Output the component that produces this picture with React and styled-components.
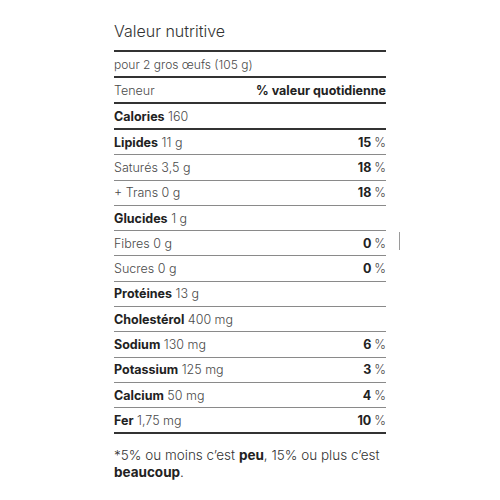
import React from 'react';
import styled, { createGlobalStyle } from 'styled-components';

const GlobalStyle = createGlobalStyle`
  body {
    margin: 0;
    background: #ffffff;
    font-family: Inter, "Liberation Sans", sans-serif;
    color: #333333;
  }
`;

const rows = [
  { name: 'Calories', value: '160', bold: true, thick: true },
  { name: 'Lipides', value: '11 g', pct: '15 %', bold: true },
  { name: 'Saturés 3,5 g', pct: '18 %' },
  { name: '+ Trans 0 g', pct: '18 %' },
  { name: 'Glucides', value: '1 g', bold: true },
  { name: 'Fibres 0 g', pct: '0 %' },
  { name: 'Sucres 0 g', pct: '0 %' },
  { name: 'Protéines', value: '13 g', bold: true },
  { name: 'Cholestérol', value: '400 mg', bold: true },
  { name: 'Sodium', value: '130 mg', pct: '6 %', bold: true },
  { name: 'Potassium', value: '125 mg', pct: '3 %', bold: true },
  { name: 'Calcium', value: '50 mg', pct: '4 %', bold: true },
  { name: 'Fer', value: '1,75 mg', pct: '10 %', bold: true, thick: true },
];

const App = () => {
  return (
    <>
      <GlobalStyle />
      <Label>
        <Title>Valeur nutritive</Title>
        <Row $thick>
          <Light $small>pour 2 gros œufs (105 g)</Light>
        </Row>
        <Row $thick>
          <Light>Teneur</Light>
          <Strong>% valeur quotidienne</Strong>
        </Row>
        {rows.map((r) => (
          <Row key={r.name} $thick={r.thick}>
            <span>
              {r.bold ? <Strong>{r.name}</Strong> : <Light>{r.name}</Light>}
              {r.value && <Light> {r.value}</Light>}
            </span>
            {r.pct && <Strong>{r.pct.replace(' %', '')} <Light>%</Light></Strong>}
          </Row>
        ))}
        <Note>
          *5% ou moins c’est <b>peu</b>, 15% ou plus c’est <b>beaucoup</b>.
        </Note>
        <Tick />
      </Label>
    </>
  );
};

const Label = styled.div`
  position: relative;
  width: 272px;
  margin: 0 auto;
  padding-top: 19px;
`;

const Title = styled.h2`
  margin: 0;
  padding-bottom: 7px;
  font-size: 16px;
  font-weight: 300;
  line-height: 24px;
  color: #333333;
  border-bottom: 2px solid #333333;
`;

const Row = styled.div`
  display: flex;
  align-items: center;
  justify-content: space-between;
  height: ${({ $thick }) => ($thick ? '24px' : '24.3px')};
  font-size: 12.5px;
  border-bottom: ${({ $thick }) => ($thick ? '2px solid #333333' : '1px solid #8a8a8a')};
`;

const Light = styled.span`
  font-weight: 300;
  font-size: ${({ $small }) => ($small ? '12px' : 'inherit')};
  color: #4a4a4a;
`;

const Strong = styled.span`
  font-weight: 700;
  color: #222222;
`;

const Note = styled.p`
  margin: 13px 0 0;
  font-size: 13.5px;
  line-height: 17px;
  font-weight: 300;
  color: #333333;

  b {
    font-weight: 700;
    color: #222222;
  }
`;

const Tick = styled.div`
  position: absolute;
  left: 285px;
  top: 232px;
  width: 1px;
  height: 18px;
  background: #9a9a9a;
`;

export default App;
